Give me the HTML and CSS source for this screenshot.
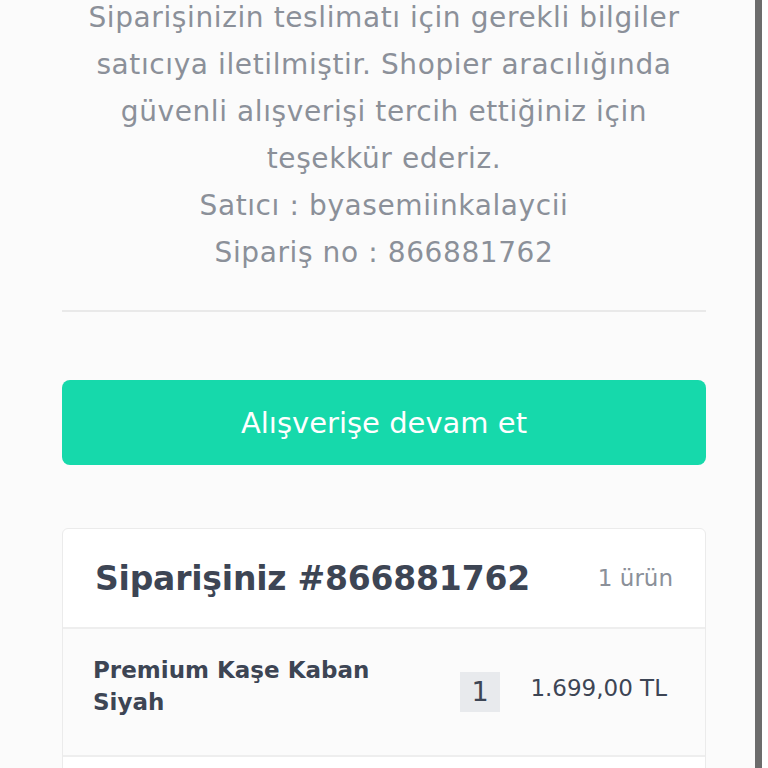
FILE: index.html
```html
<!DOCTYPE html>
<html>
<head>
	<title>Sipariş Tamamlandı</title>
	<link rel="stylesheet" href="styles.css">
</head>
<body>
	<div class="page">
		<div class="message">
			<p>Siparişinizin teslimatı için gerekli bilgiler satıcıya iletilmiştir. Shopier aracılığında güvenli alışverişi tercih ettiğiniz için teşekkür ederiz.</p>
			<p>Satıcı : byasemiinkalaycii</p>
			<p>Sipariş no : 866881762</p>
		</div>

		<div class="divider"></div>

		<a href="#" class="continue-btn">Alışverişe devam et</a>

		<div class="order-card">
			<div class="order-head">
				<h2>Siparişiniz #866881762</h2>
				<span class="count">1 ürün</span>
			</div>
			<div class="order-item">
				<p class="item-name">Premium Kaşe Kaban Siyah</p>
				<span class="qty">1</span>
				<span class="price">1.699,00 TL</span>
			</div>
			<div class="order-foot"></div>
		</div>
	</div>
	<div class="edge"></div>
</body>
</html>
```

FILE: styles.css
```css
html, body {
	margin: 0;
	height: 768px;
	overflow: hidden;
	background-color: #fff;
}
body {
	display: flex;
	font-family: "DejaVu Sans", sans-serif;
}
.page {
	flex: 0 0 693px;
	padding: 0 0 0 62px;
	background-color: #fbfbfb;
	display: flex;
	flex-direction: column;
}
.page > * {
	width: 644px;
	flex-shrink: 0;
}
.edge {
	flex: 0 0 7px;
	background-color: #6c6c6c;
}
.message {
	margin-top: -6px;
	text-align: center;
	color: #8b9099;
	font-size: 28px;
	letter-spacing: 0.6px;
	line-height: 47px;
	padding: 0 14px;
	box-sizing: border-box;
}
.message p {
	margin: 0;
}
.divider {
	margin-top: 34px;
	height: 2px;
	background-color: #e9e9e9;
}
.continue-btn {
	margin-top: 68px;
	display: flex;
	align-items: center;
	justify-content: center;
	height: 85px;
	background-color: #16d9ab;
	border-radius: 8px;
	color: #fff;
	font-size: 29px;
	text-decoration: none;
}
.order-card {
	margin-top: 63px;
	background-color: #fff;
	border: 1px solid #ebebeb;
	border-radius: 6px;
	box-sizing: border-box;
}
.order-head {
	display: flex;
	align-items: center;
	justify-content: space-between;
	height: 98px;
	padding: 0 32px;
	border-bottom: 2px solid #eeeeee;
}
.order-head h2 {
	margin: 0;
	font-size: 33px;
	letter-spacing: -0.2px;
	font-weight: 700;
	color: #3d4554;
}
.count {
	font-size: 23px;
	color: #8b9099;
}
.order-item {
	display: flex;
	align-items: center;
	height: 126px;
	padding: 0 38px 0 30px;
	background-color: #fbfbfb;
	border-bottom: 2px solid #eeeeee;
}
.item-name {
	margin: 0 0 12px;
	width: 300px;
	font-size: 23px;
	line-height: 32px;
	font-weight: 700;
	color: #3d4554;
}
.qty {
	margin: 0 0 0 67px;
	width: 40px;
	height: 40px;
	line-height: 40px;
	text-align: center;
	background-color: #e8eaed;
	font-size: 27px;
	color: #3d4554;
}
.price {
	margin-left: auto;
	margin-bottom: 8px;
	font-size: 23px;
	color: #3d4554;
}
.order-foot {
	height: 40px;
}
```
